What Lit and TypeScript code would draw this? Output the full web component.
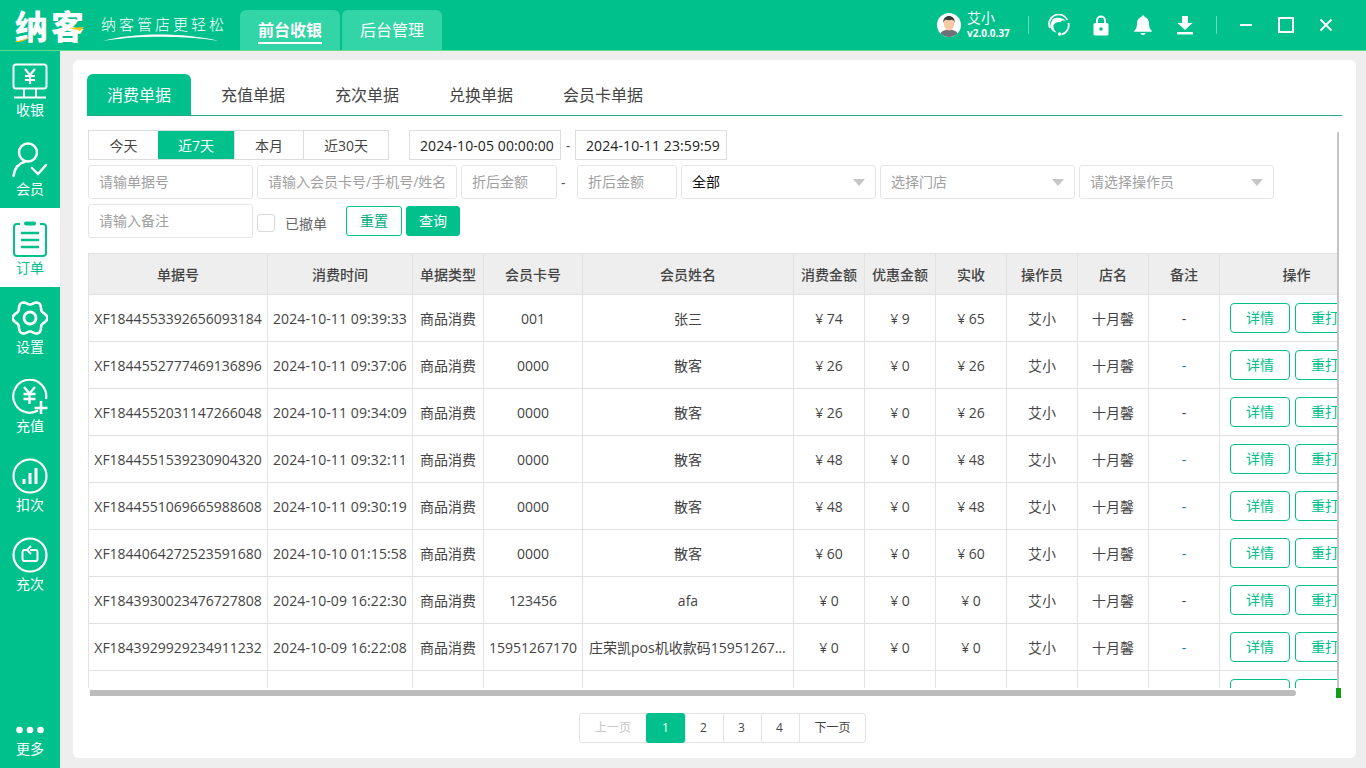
import { LitElement, html, css } from "lit";
import { customElement } from "lit/decorators.js";

const gearPath = () => {
  const pts: string[] = [];
  for (let i = 0; i < 120; i++) {
    const t = (i / 120) * Math.PI * 2;
    const r = 15.4 + 1.9 * Math.cos(6 * t);
    pts.push(`${(18 + r * Math.cos(t)).toFixed(2)} ${(18 + r * Math.sin(t)).toFixed(2)}`);
  }
  return "M" + pts.join("L") + "Z";
};

const navIcons: Record<string, unknown> = {
  pos: html`<svg viewBox="0 0 36 36" class="ni"><rect x="1.5" y="1.5" width="33" height="24" rx="2.5" fill="none" stroke="currentColor" stroke-width="2"/><path d="M13 6l5 6 5-6M18 12v9M13 13h10M13 17h10" fill="none" stroke="currentColor" stroke-width="2.2"/><path d="M12 26v8M24 26v8M2 34.500h32" fill="none" stroke="currentColor" stroke-width="2"/></svg>`,
  member: html`<svg viewBox="0 0 36 36" class="ni"><circle cx="16" cy="10.500" r="9" fill="none" stroke="currentColor" stroke-width="2.400"/><path d="M1.500 34c1-8 6-13 12-14.500" fill="none" stroke="currentColor" stroke-width="2.400" stroke-linecap="round"/><path d="M20 26l6 6 8-9" fill="none" stroke="currentColor" stroke-width="2.400" stroke-linecap="round"/></svg>`,
  order: html`<svg viewBox="0 0 36 36" class="ni"><path d="M8 3H5a3 3 0 0 0-3 3v26a3 3 0 0 0 3 3h26a3 3 0 0 0 3-3V6a3 3 0 0 0-3-3h-3" fill="none" stroke="currentColor" stroke-width="2"/><rect x="12" y="0.500" width="12" height="4" rx="2" fill="currentColor"/><path d="M9 12h18M9 19h18M9 26h18" stroke="currentColor" stroke-width="2.400"/></svg>`,
  gear: html`<svg viewBox="0 0 36 36" class="ni"><path d="${gearPath()}" fill="none" stroke="currentColor" stroke-width="2.600"/><circle cx="18" cy="18" r="6" fill="none" stroke="currentColor" stroke-width="2.800"/></svg>`,
  recharge: html`<svg viewBox="0 0 36 36" class="ni"><path d="M26 31.500A16.500 16.500 0 1 1 34 20" fill="none" stroke="currentColor" stroke-width="2.200"/><path d="M12 8l5.500 6.500L23 8M17.500 14.500V25M11.500 15h12M11.500 20h12" fill="none" stroke="currentColor" stroke-width="2.400"/><path d="M29 22v13M22.500 29h13" stroke="currentColor" stroke-width="2.600"/></svg>`,
  deduct: html`<svg viewBox="0 0 36 36" class="ni"><circle cx="18" cy="18" r="16.500" fill="none" stroke="currentColor" stroke-width="2.200"/><path d="M10.500 21h3v5h-3zM16.500 15h3v11h-3zM22.500 10h3v16h-3z" fill="currentColor"/></svg>`,
  times: html`<svg viewBox="0 0 36 36" class="ni"><circle cx="18" cy="18" r="16.500" fill="none" stroke="currentColor" stroke-width="2.200"/><path d="M15 13h-2.500a2 2 0 0 0-2 2v7a2 2 0 0 0 2 2h11a2 2 0 0 0 2-2v-7a2 2 0 0 0-2-2H18" fill="none" stroke="currentColor" stroke-width="2"/><path d="M19 9l-4 4 4 4" fill="none" stroke="currentColor" stroke-width="2"/></svg>`,
  more: html`<svg viewBox="0 0 36 12" class="dots"><circle cx="7.500" cy="6" r="3.300" fill="currentColor"/><circle cx="18" cy="6" r="3.300" fill="currentColor"/><circle cx="28.500" cy="6" r="3.300" fill="currentColor"/></svg>`,
};

const navTop = [
  { k: "pos", t: "收银" },
  { k: "member", t: "会员" },
  { k: "order", t: "订单", active: true },
  { k: "gear", t: "设置" },
  { k: "recharge", t: "充值" },
  { k: "deduct", t: "扣次" },
  { k: "times", t: "充次" },
];

const cols = [180, 145, 71, 99, 211, 71, 71, 71, 71, 71, 71, 154];
const heads = ["单据号", "消费时间", "单据类型", "会员卡号", "会员姓名", "消费金额", "优惠金额", "实收", "操作员", "店名", "备注", "操作"];

const rows = [
  ["XF1844553392656093184", "2024-10-11 09:39:33", "001", "张三", "¥ 74", "¥ 9", "¥ 65", false],
  ["XF1844552777469136896", "2024-10-11 09:37:06", "0000", "散客", "¥ 26", "¥ 0", "¥ 26", true],
  ["XF1844552031147266048", "2024-10-11 09:34:09", "0000", "散客", "¥ 26", "¥ 0", "¥ 26", false],
  ["XF1844551539230904320", "2024-10-11 09:32:11", "0000", "散客", "¥ 48", "¥ 0", "¥ 48", true],
  ["XF1844551069665988608", "2024-10-11 09:30:19", "0000", "散客", "¥ 48", "¥ 0", "¥ 48", true],
  ["XF1844064272523591680", "2024-10-10 01:15:58", "0000", "散客", "¥ 60", "¥ 0", "¥ 60", true],
  ["XF1843930023476727808", "2024-10-09 16:22:30", "123456", "afa", "¥ 0", "¥ 0", "¥ 0", false],
  ["XF1843929929234911232", "2024-10-09 16:22:08", "15951267170", "庄荣凯pos机收款码15951267170", "¥ 0", "¥ 0", "¥ 0", true],
] as const;

@customElement("app-root")
export class AppRoot extends LitElement {
  static styles = css`
    :host {
      display: flex;
      flex-direction: column;
      width: 1366px;
      height: 768px;
      overflow: hidden;
      background: #eeeeee;
      font-family: "Open Sans", "Noto Sans CJK SC", sans-serif;
      font-size: 14px;
      color: #444;
    }
    * { box-sizing: border-box; }
    .top {
      height: 51px;
      flex: none;
      display: flex;
      align-items: flex-end;
      background: #00c18c;
      border-bottom: 1px solid #62dd8c;
      color: #fff;
    }
    .logo {
      position: relative;
      width: 72px;
      height: 50px;
      margin-left: 15px;
      font-size: 33px;
      line-height: 53px;
      letter-spacing: 3px;
      font-weight: 900;
      white-space: nowrap;
    }
    .logo svg { position: absolute; left: 0; top: 0; width: 72px; height: 50px; }
    .slogan {
      position: relative;
      width: 126px;
      height: 50px;
      margin-left: 14px;
      font-size: 15px;
      line-height: 48px;
      letter-spacing: 3px;
      white-space: nowrap;
      font-weight: 300;
    }
    .slogan svg { position: absolute; left: 0; top: 30px; width: 126px; height: 14px; }
    .toptabs { display: flex; gap: 2px; margin-left: 13px; height: 40px; }
    .toptab {
      width: 100px;
      height: 40px;
      border-radius: 6px 6px 0 0;
      background: #33d4a6;
      font-size: 16px;
      display: flex;
      align-items: flex-start;
      justify-content: center;
      line-height: 24px;
      padding-top: 8px;
    }
    .toptab span { display: block; height: 26px; }
    .toptab.on span { font-weight: 700; border-bottom: 2px solid #fff; }
    .right { margin-left: auto; display: flex; align-items: center; height: 50px; padding-right: 20px; }
    .avatar { width: 24px; height: 24px; display: block; }
    .user { margin-left: 6px; width: 41px; display: flex; flex-direction: column; line-height: 14px; }
    .user b { font-weight: 400; font-size: 14px; line-height: 16px; white-space: nowrap; }
    .user i { font-style: normal; font-weight: 700; font-size: 10px; line-height: 14px; white-space: nowrap; }
    .sep { width: 1px; height: 18px; background: #66dabc; margin: 0 9px 0 20px; }
    .sep.b { margin-left: 10px; }
    .tool { width: 42px; height: 50px; display: flex; align-items: center; justify-content: center; }
    .tool svg { width: 22px; height: 22px; display: block; }
    .win { width: 40px; height: 50px; display: flex; align-items: center; justify-content: center; }
    .win svg { width: 18px; height: 18px; display: block; }

    .main { flex: 1; display: flex; min-height: 0; }
    .side { width: 60px; flex: none; background: #00c18c; color: #fff; display: flex; flex-direction: column; }
    .nav { height: 79px; flex: none; display: flex; flex-direction: column; align-items: center; padding-top: 13px; }
    .nav:first-child { height: 78px; padding-top: 12px; }
    .nav.on { background: #fff; color: #00c18c; }
    .ni { width: 36px; height: 36px; display: block; flex: none; }
    .nav span { font-size: 14px; line-height: 20px; margin-top: 1px; }
    .nav.more { margin-top: auto; height: 44px; padding-top: 0; }
    .dots { width: 36px; height: 12px; display: block; margin-bottom: 2px; }

    .panel {
      flex: 1;
      margin: 9px 10px 10px 13px;
      padding: 14px 14px 0;
      background: #fff;
      border-radius: 6px;
      min-width: 0;
    }
    .tabs { display: flex; height: 42px; gap: 10px; border-bottom: 1px solid #25ad8a; }
    .tab { padding: 0 20px; font-size: 16px; line-height: 43px; color: #444; height: 41px; border-radius: 6px 6px 0 0; }
    .tab.on { background: #00c18c; color: #fff; }
    .wrap { position: relative; margin: 14px 0 0 1px; width: 1251px; }
    .vbar { position: absolute; right: 0; top: 2px; height: 558px; width: 2px; background: #c4c4c4; }
    .frow { display: flex; gap: 4px; align-items: center; }
    .r1 { height: 30px; gap: 0; }
    .r2 { height: 34px; margin-top: 5px; }
    .r3 { height: 34px; margin-top: 5px; }
    .seg { display: flex; height: 30px; border: 1px solid #ddd; margin-right: 20px; }
    .seg div { text-align: center; line-height: 29px; color: #444; border-left: 1px solid #ddd; }
    .seg div:first-child { border-left: 0; }
    .seg div.on { background: #00c18c; color: #fff; border-left: 0; }
    input, .select {
      height: 100%;
      border: 1px solid #e5e5e5;
      border-radius: 3px;
      padding: 0 0 2px 10px;
      font: inherit;
      color: #222;
      background: #fff;
      outline: none;
      flex: none;
      min-width: 0;
    }
    input::placeholder { color: #a0a0a0; opacity: 1; }
    .date { width: 152px; height: 30px; border: 1px solid #ddd; border-radius: 0; color: #222; padding: 0 0 0 10px; letter-spacing: 0.1px; }
    .w165 { width: 165px; } .w200 { width: 200px; } .w96 { width: 96px; } .w100 { width: 100px; }
    .dash { width: 14px; text-align: center; color: #555; flex: none; }
    .dash.s { width: 12px; text-align: left; }
    .select { width: 195px; display: flex; align-items: center; justify-content: space-between; padding-right: 10px; color: #a0a0a0; }
    .select.val { color: #111; }
    .tri { width: 0; height: 0; border-left: 6px solid transparent; border-right: 6px solid transparent; border-top: 7px solid #c6c6c6; margin-top: 2px; }
    .check { width: 18px; height: 18px; border: 1px solid #d9d9d9; border-radius: 3px; flex: none; margin-top: 3px; }
    .chk-l { margin-left: 6px; color: #666; width: 42px; white-space: nowrap; margin-top: 4px; }
    .btn { height: 30px; border-radius: 3px; text-align: center; line-height: 28px; flex: none; border: 1px solid #00c18c; }
    .reset { width: 56px; color: #00a97b; margin-left: 15px; }
    .query { width: 54px; background: #00c18c; color: #fff; }

    .tbl { margin-top: 15px; height: 435px; width: 1249px; overflow: hidden; }
    table { table-layout: fixed; border-collapse: separate; border-spacing: 0; width: 1286px; }
    th, td { border-right: 1px solid #e2e2e2; border-bottom: 1px solid #e2e2e2; padding: 0; text-align: center; white-space: nowrap; overflow: hidden; text-overflow: ellipsis; }
    th { height: 42px; background: #eeeeee; border-top: 1px solid #e2e2e2; font-weight: 500; color: #444; font-size: 14px; }
    td { height: 47px; color: #444; }
    td.time { letter-spacing: 0.1px; }
    th:first-child, td:first-child { border-left: 1px solid #e2e2e2; }
    td.name { padding: 0 6px; }
    td.blue { color: #1579b8; }
    td.ops { text-align: left; padding-left: 10px; overflow: visible; text-overflow: clip; }
    .opsbox { display: flex; gap: 5px; }
    .op { flex: none; width: 60px; height: 30px; line-height: 28px; text-align: center; border: 1px solid #00c18c; border-radius: 4px; color: #00c18c; }
    tr.last td { height: 17px; vertical-align: top; border-bottom: 0; }
    tr.last .opsbox { margin-top: 8px; }
    .hs { height: 10px; width: 1249px; padding: 2px 0 0 2px; }
    .thumb { width: 1206px; height: 6px; background: #bcbcbc; border-radius: 0 3px 3px 0; }
    .mark { position: absolute; right: -2px; top: 558px; width: 5px; height: 10px; background: #12a012; }
    .pager { display: flex; margin: 15px 0 0 491px; height: 30px; width: 287px; border: 1px solid #e2e2e2; border-radius: 3px; font-size: 12px; }
    .pager div { line-height: 28px; text-align: center; border-left: 1px solid #e2e2e2; color: #444; }
    .pager div.num { padding-right: 2px; }
    .pager div:first-child { border-left: 0; color: #c8c8c8; }
    .pager div.on { background: #00c18c; color: #fff; border-left: 0; border-radius: 3px; margin: -1px 0; line-height: 30px; height: 30px; padding-right: 0; }
  `;

  render() {
    return html`
      <div class="top">
        <div class="logo">纳客<svg viewBox="0 0 72 50"><path d="M0 41c5 0 9-1 13-4-1 3-6 5-12 5z" fill="#f6c21c"/><path d="M53 28c6 0 11-1 16-1-2 2-3 3-4 4-4-2-8-2-12-3z" fill="#f6c21c"/></svg></div>
        <div class="slogan">纳客管店更轻松<svg viewBox="0 0 126 14"><path d="M2 11C30 3 80 2 118 11 80 5 32 6 2 11z" fill="#fff"/></svg></div>
        <div class="toptabs">
          <div class="toptab on"><span>前台收银</span></div>
          <div class="toptab"><span>后台管理</span></div>
        </div>
        <div class="right">
          <svg class="avatar" viewBox="0 0 24 24"><circle cx="12" cy="12" r="12" fill="#fff"/><path d="M3.500 20.500c1.500-3 5-4 8.500-4s7 1 8.500 4A12 12 0 0 1 12 24a12 12 0 0 1-8.500-3.500z" fill="#6d7278"/><ellipse cx="12" cy="11" rx="5.200" ry="6.500" fill="#f6c9a6"/><path d="M6.500 10c-.8-5 2.500-7 5.500-7s6.300 2 5.500 7c-.5-2-1-3-2.500-3.200-2 .6-4 .6-6 0C7.500 7 7 8 6.500 10z" fill="#3c3c3c"/></svg>
          <div class="user"><b>艾小</b><i>v2.0.0.37</i></div>
          <div class="sep"></div>
          <div class="tool"><svg viewBox="0 0 22 22"><path d="M2 14A9.500 9.500 0 0 1 19.500 6" fill="none" stroke="#fff" stroke-width="1.800"/><path d="M20.500 9c1 5-1.500 10-7 11.500" fill="none" stroke="#fff" stroke-width="1.800"/><path d="M5 5c3-2 9-2 13 2-3-1-5 0-5.500 1C10 7.500 7 8.500 5.500 11c-.5 3 1 6 3 7.500C5 18 2 15 2.500 11 3 8.500 4 6.500 5 5z" fill="#fff"/><circle cx="11.500" cy="20" r="1.700" fill="#fff"/></svg></div>
          <div class="tool"><svg viewBox="0 0 22 22"><path d="M7 10V6.500a4 4 0 0 1 8 0V10" fill="none" stroke="#fff" stroke-width="2"/><rect x="3.500" y="9" width="15" height="12.500" rx="1.500" fill="#fff"/><circle cx="11" cy="15" r="1.800" fill="#00c18c"/></svg></div>
          <div class="tool"><svg viewBox="0 0 22 22"><path d="M11 1.500c1 0 1.600.6 1.700 1.500 3 .8 4.300 3.500 4.300 6.500 0 3 .5 5 2.800 7.500v.8H2.200V17C4.500 14.500 5 12.500 5 9.500 5 6.500 6.300 3.800 9.300 3c.1-.9.700-1.500 1.700-1.500z" fill="#fff"/><path d="M8.500 19h5a2.500 2 0 0 1-5 0z" fill="#fff"/></svg></div>
          <div class="tool"><svg viewBox="0 0 22 22"><path d="M8 2h6v7h4.500L11 16 3.500 9H8z" fill="#fff"/><rect x="3" y="18" width="16" height="2.400" fill="#fff"/></svg></div>
          <div class="sep b"></div>
          <div class="win"><svg viewBox="0 0 18 18"><rect x="3" y="8" width="12" height="2" fill="#fff"/></svg></div>
          <div class="win"><svg viewBox="0 0 18 18"><rect x="2" y="2" width="14" height="14" fill="none" stroke="#fff" stroke-width="2"/></svg></div>
          <div class="win"><svg viewBox="0 0 18 18"><path d="M3.500 3.500l11 11M14.500 3.500l-11 11" stroke="#fff" stroke-width="1.800"/></svg></div>
        </div>
      </div>
      <div class="main">
        <div class="side">
          ${navTop.map((n) => html`<div class="nav ${n.active ? "on" : ""}">${navIcons[n.k]}<span>${n.t}</span></div>`)}
          <div class="nav more">${navIcons.more}<span>更多</span></div>
        </div>
        <div class="panel">
          <div class="tabs">
            ${["消费单据", "充值单据", "充次单据", "兑换单据", "会员卡单据"].map((t, i) => html`<div class="tab ${i === 0 ? "on" : ""}">${t}</div>`)}
          </div>
          <div class="wrap">
            <div class="frow r1">
              <div class="seg">
                ${[["今天", 69], ["近7天", 76], ["本月", 69], ["近30天", 85]].map(([t, w], i) => html`<div class="${i === 1 ? "on" : ""}" style="width:${w}px">${t}</div>`)}
              </div>
              <input class="date" value="2024-10-05 00:00:00" />
              <div class="dash">-</div>
              <input class="date" value="2024-10-11 23:59:59" />
            </div>
            <div class="frow r2">
              <input class="w165" placeholder="请输单据号" />
              <input class="w200" placeholder="请输入会员卡号/手机号/姓名" />
              <input class="w96" placeholder="折后金额" />
              <div class="dash s">-</div>
              <input class="w100" placeholder="折后金额" />
              <div class="select val">全部<i class="tri"></i></div>
              <div class="select">选择门店<i class="tri"></i></div>
              <div class="select">请选择操作员<i class="tri"></i></div>
            </div>
            <div class="frow r3">
              <input class="w165" placeholder="请输入备注" />
              <div class="check"></div>
              <div class="chk-l">已撤单</div>
              <div class="btn reset">重置</div>
              <div class="btn query">查询</div>
            </div>
            <div class="tbl">
              <table>
                <colgroup>${cols.map((w) => html`<col style="width:${w}px" />`)}</colgroup>
                <thead><tr>${heads.map((h) => html`<th>${h}</th>`)}</tr></thead>
                <tbody>
                  ${rows.map((r) => html`<tr>
                    <td>${r[0]}</td><td class="time">${r[1]}</td><td>商品消费</td><td>${r[2]}</td><td class="name">${r[3]}</td>
                    <td>${r[4]}</td><td>${r[5]}</td><td>${r[6]}</td><td>艾小</td><td>十月馨</td>
                    <td class="${r[7] ? "blue" : ""}">-</td>
                    <td class="ops"><div class="opsbox"><span class="op">详情</span><span class="op">重打</span></div></td>
                  </tr>`)}
                  <tr class="last">${cols.slice(0, 11).map(() => html`<td></td>`)}<td class="ops"><div class="opsbox"><span class="op"></span><span class="op"></span></div></td></tr>
                </tbody>
              </table>
            </div>
            <div class="hs"><div class="thumb"></div></div>
            <div class="vbar"></div>
            <div class="mark"></div>
            <div class="pager">
              ${[["上一页", 66], ["1", 39], ["2", 38], ["3", 38], ["4", 38], ["下一页", 66]].map(([t, w], i) => html`<div class="${i === 1 ? "on" : i >= 2 && i <= 4 ? "num" : ""}" style="width:${w}px">${t}</div>`)}
            </div>
          </div>
        </div>
      </div>
    `;
  }
}
